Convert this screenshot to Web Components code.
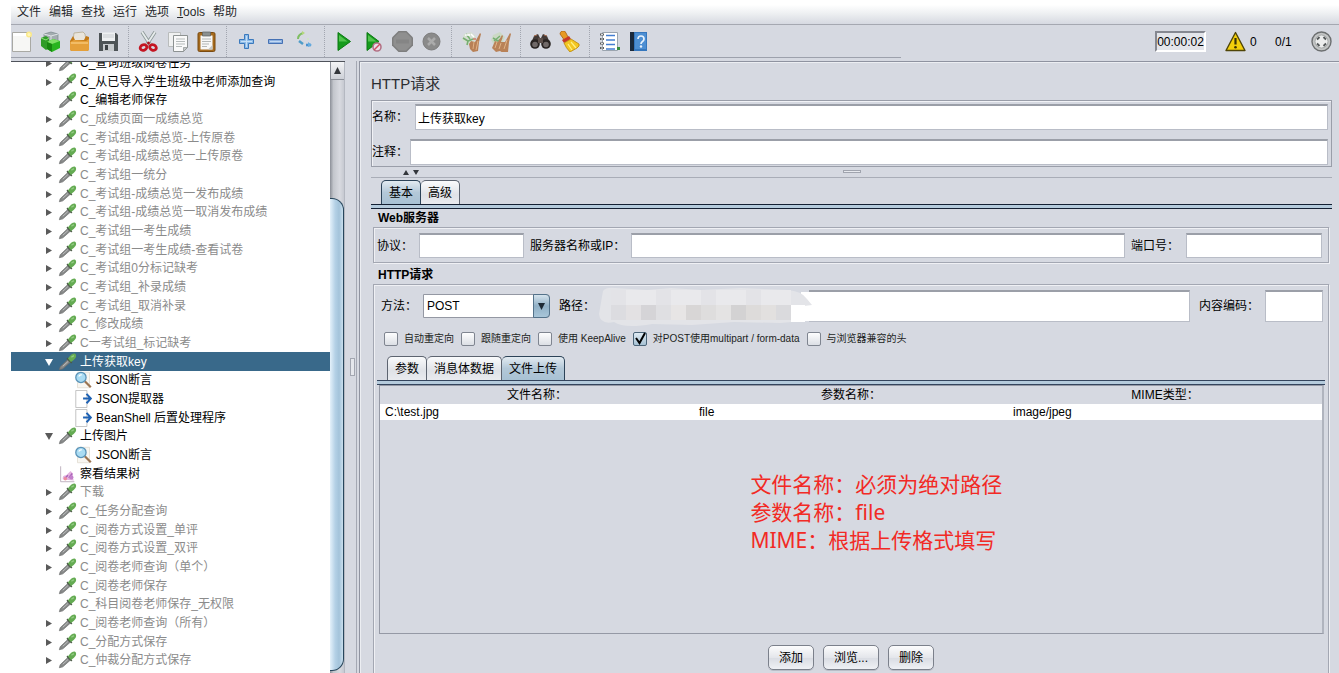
<!DOCTYPE html>
<html lang="zh-CN">
<head>
<meta charset="utf-8">
<title>JMeter</title>
<style>
  html, body { margin: 0; height: 100%; }
  body {
    --panel: #d6d9e1;
    background: #fff; overflow: hidden; color: #000;
    font: 12px/16px "Liberation Sans", "Noto Sans CJK SC", sans-serif;
  }
</style>
</head>
<body>
<jm-app></jm-app>

<script>
const define = (name, html, setup) => customElements.define(name, class extends HTMLElement {
  connectedCallback() {
    if (this.shadowRoot) return;
    const root = this.attachShadow({ mode: 'open' });
    const t = document.createElement('template');
    t.innerHTML = '<style>*{box-sizing:border-box}button,input,select{font:inherit;color:inherit;margin:0}</style>' +
      (typeof html === 'function' ? html(this) : html);
    root.append(t.content.cloneNode(true));
    if (setup) setup(this, root);
  }
});

const ICONS = {
  new: '<path d="M1.500 1.500h18v19h-18z" fill="#f7f7f5" stroke="#a9a9a4"/><path d="M2 2h17v3H2z" fill="#fff"/><circle cx="18" cy="3.500" r="3" fill="#fbe98a"/><circle cx="18" cy="3.500" r="1.500" fill="#fff6b8"/>',
  templates: '<path d="M4 3l7-2 7 2v9l-7 4-7-4z" fill="#a3acb0" stroke="#78868a" stroke-width=".7"/><path d="M4 3l7 2 7-2M11 5v9" stroke="#dfe5e6" fill="none"/><path d="M1 7l5-2 3 2v10l-3 2-5-4z" fill="#2f9c27"/><path d="M1 7l5 2 3-2" stroke="#91df7c" fill="none"/><path d="M7 11l6-3 7 2v7l-8 4-5-3z" fill="#28b41e"/><path d="M7 11l5 2 8-3-7-2z" fill="#7fe065"/><path d="M12 13v8l-5-3v-7z" fill="#17870f"/>',
  open: '<path d="M5 2l9-1 2 2 1 7H4z" fill="#e9e5dc" stroke="#b5a98e" stroke-width=".8"/><path d="M1 10l3-5 2 4h9l2-4 3 1v13l-2 1H3l-2-1z" fill="#c27a18"/><path d="M1 11l4-2 12 1 3-2v11l-2 1H3l-2-1z" fill="#e5a03a"/><path d="M2 12h17" stroke="#ffd890"/>',
  save: '<path d="M1 2h17l2 2v16H1z" fill="#4d5356"/><path d="M4 1.500h13V10H4z" fill="#eef0f2"/><path d="M5 4h11M5 6h11" stroke="#c8ccd0"/><path d="M5 13h11v7H5z" fill="#c6cacd"/><path d="M7 14h3v5H7z" fill="#3c4144"/>',
  cut: '<path d="M4 1l8.500 13M17 1L8.500 14" stroke="#8b9696" stroke-width="3.400"/><path d="M4 1l8.500 13M17 1L8.500 14" stroke="#e7ecec" stroke-width="1.800"/><ellipse cx="5.500" cy="16.500" rx="3.400" ry="2.700" fill="none" stroke="#c41421" stroke-width="2.800" transform="rotate(-25 5.500 16.500)"/><ellipse cx="15" cy="16.500" rx="3.400" ry="2.700" fill="none" stroke="#c41421" stroke-width="2.800" transform="rotate(25 15 16.500)"/><circle cx="10.500" cy="12" r="1.500" fill="#a9131f"/>',
  copy: '<path d="M1.500 1.500h12v14h-12z" fill="#f0f1f1" stroke="#b9bcbc"/><path d="M6.500 4.500h14v12l-4 4h-10z" fill="#fafafa" stroke="#8d9292"/><path d="M9 8h9M9 10.500h9M9 13h9M9 15.500h6" stroke="#b6bbbb"/><path d="M20.500 16.500h-4v4z" fill="#c5c8c8" stroke="#8d9292" stroke-width=".7"/>',
  paste: '<rect x="2" y="1.500" width="17" height="19" rx="1.500" fill="#a56a1d" stroke="#7a4a10"/><path d="M4.500 4.500h12v14h-12z" fill="#f8f8f8"/><path d="M6 8h9M6 10.500h9M6 13h7M6 15.500h5" stroke="#b4b8b8"/><path d="M6.500 1h8v4h-8z" fill="#8b9090" stroke="#5d6262" stroke-width=".7"/><path d="M12 18.500l4.500-4.500v4.500z" fill="#c4c8c8"/>',
  plus: '<path d="M8.500 3.500h4v5h5v4h-5v5h-4v-5h-5v-4h5z" fill="#8dbbe8" stroke="#3b79bd"/><path d="M10.500 5v11M5 10.500h11" stroke="#c6e0f7"/>',
  minus: '<path d="M3.500 8.500h14v4h-14z" fill="#8db1e0" stroke="#4571b4"/><path d="M5 10.500h11" stroke="#c3d9f3"/>',
  toggle: '<path d="M4 8c0-3 2-5 5-6" fill="none" stroke="#7fbe63" stroke-width="2"/><path d="M8 0l3 2-3 2z" fill="#b3d77b"/><path d="M5 10l4 3" stroke="#4f9cc8" stroke-width="2.400"/><path d="M12 14h5" stroke="#4a92d0" stroke-width="2.600"/><path d="M14 11l4 3-4 2z" fill="#67aee0"/><circle cx="14" cy="8" r="1" fill="#cfe6c3"/>',
  run: '<path d="M4 1.500L16.500 10.500 4 19.500z" fill="#159b1c" stroke="#0b7911"/><path d="M5 4l8.500 6.500H5z" fill="#53c44e"/>',
  run2: '<path d="M4 1.500L16 10.500 4 19.500z" fill="#159b1c" stroke="#0b7911"/><path d="M5 4l8.500 6.500H5z" fill="#53c44e"/><circle cx="14" cy="16" r="4" fill="#e9dfe9" stroke="#b37387" stroke-width="1.600"/><path d="M11 19l6-6" stroke="#d24b62" stroke-width="1.500"/>',
  stop: '<path d="M6.500 0h8l6.500 6.500v8L14.500 21h-8L0 14.500v-8z" fill="#7e7e7e"/><path d="M7 1.500h7l5.500 5.500v7L14 19.500H7L1.500 14V7z" fill="#8f8f8f"/><path d="M4 10.500h13" stroke="#858585" stroke-width="4"/>',
  shutdown: '<circle cx="10.500" cy="10.500" r="8.500" fill="#8a8a8a" stroke="#7b7b7b"/><path d="M7 7l7 7M14 7l-7 7" stroke="#ababab" stroke-width="2.500"/>',
  clear: '<path d="M3 3l7-2 5 4-2 8-6 1-6-5z" fill="#d5ded1"/><path d="M2 7l5 3 5-2M5 3l4 5M7 10l-1 4" stroke="#77af72" stroke-width="1.600" fill="none"/><path d="M4 4h5M10 3l3 3" stroke="#fff" stroke-width="1.500"/><path d="M9 18l-1-5 2-3 4 1 5-9 1 1-2 8-1 9-5 1z" fill="#b88056"/><path d="M12 18l1-7M15 19l2-9" stroke="#e1b184"/><path d="M12 8h3" stroke="#c74b33"/>',
  clearall: '<path d="M3 4l7-3 5 5-3 7-8 1-3-5z" fill="#cbd9c5"/><path d="M3 7l5 3 4-3M4 10l6-5" stroke="#77af72" stroke-width="1.500" fill="none"/><path d="M2 17l3-7 3 1 4-7 1 1-2 6 4 0 5-9 1 1-2 8-1 10-5 1-3-2-4 1z" fill="#b98258"/><path d="M5 17l2-6M9 18l2-6M14 18l3-9" stroke="#e0b487"/>',
  search: '<path d="M4 5l4-2 2 4-1 5H1zM17 5l-4-2-2 4 1 5h8z" fill="#433a37"/><circle cx="5" cy="13" r="4.800" fill="#292422"/><circle cx="16" cy="13" r="4.800" fill="#292422"/><path d="M8 7h5v5H8z" fill="#5d504b"/><circle cx="5" cy="13.500" r="2.800" fill="#706968"/><circle cx="16" cy="13.500" r="2.800" fill="#706968"/><path d="M4 5l3-1M14 4l3 1" stroke="#a56b4e"/>',
  broom: '<path d="M3 0q3-1 4 2l3 6-4 2L1 3q0-2 2-3z" fill="#e79a24" stroke="#a85f13" stroke-width=".8"/><path d="M3 9l7-4 2 3-7 4z" fill="#c8382a"/><path d="M5 12l7-4 8 5q1 2-2 4l-7 4q-4-4-6-9z" fill="#f3c622" stroke="#b98408" stroke-width=".8"/><path d="M9 13l4 6M12 11l5 6" stroke="#fff083" stroke-width="1.200"/>',
  func: '<path d="M3.500 1.500h15v18h-15z" fill="#fff" stroke="#9ba4ae"/><path d="M7 4.500h9M7 9h9M7 13.500h9M7 18h9" stroke="#437ed1" stroke-width="1.600"/><path d="M1 3.500h4M1 8h4M1 12.500h4M1 17h4" stroke="#5b5e60" stroke-width="2"/><path d="M2 3.500h2M2 8h2M2 12.500h2M2 17h2" stroke="#ddd"/><path d="M18 16h3v3h-3z" fill="#348d3b"/>',
  help: '<path d="M2 1h17v19H2z" fill="#3577be"/><path d="M2 1h4v19H2z" fill="#1b2a3c"/><path d="M7 2h11v16H7z" fill="#4d8fd3"/><path d="M10 8q0-3 3-3t3 3q0 1.500-1.500 2.500T13 13" stroke="#e7f2fd" stroke-width="1.700" fill="none"/><circle cx="13" cy="15.500" r="1.200" fill="#e7f2fd"/>',
  warn: '<path d="M10.500 1.500L20 19.500H1z" fill="#f3cf0b" stroke="#4f4507" stroke-width="1.400" stroke-linejoin="round"/><path d="M10.500 7v6.500" stroke="#3b3405" stroke-width="2.200"/><circle cx="10.500" cy="16.300" r="1.300" fill="#3b3405"/>',
  remote: '<circle cx="10.500" cy="10.500" r="9.500" fill="#c3c5c5" stroke="#6c6f70" stroke-width="1.400"/><circle cx="10.500" cy="10.500" r="6.500" fill="#eceded" stroke="#9b9e9e" stroke-width=".8"/><path d="M6 8.500L8.500 6M12.500 6L15 8.500M15 12.500L12.500 15M8.500 15L6 12.500" stroke="#55595a" stroke-width="1.900"/>',
  sampler: '<path d="M1 19.500l1-3.500L11 7.500l3 3L5 18.500z" fill="#858787" stroke="#6b6d6d" stroke-width=".8"/><path d="M5 15.500l6-5.500" stroke="#c3c5c5" stroke-width="1.100"/><path d="M10 6l5.500 5.500" stroke="#4b5a47" stroke-width="2"/><path d="M11 6.500q3.500-6 8-6 2.500 1.500 1 5-2 3-5.500 5z" fill="#64ab52"/><path d="M15 5l3-2" stroke="#93cb83" stroke-width="1.600"/>',
  assert: '<path d="M3.500 1.500h14v18h-14z" fill="#f8f6f1" stroke="#e2ddd3"/><path d="M12 12l7 7" stroke="#9b7553" stroke-width="2.600"/><circle cx="7.500" cy="7.500" r="6" fill="#aadcf3" stroke="#5a93b8" stroke-width="1.500"/><path d="M5 6.500q1-2.500 3.500-2" stroke="#fff" stroke-width="1.500" fill="none"/>',
  post: '<path d="M1.500 .5h13v20h-13z" fill="#fff" stroke="#b9b9b9"/><path d="M10 10h9M14 4.500l5 5.500-5 5.500" stroke="#1f62b4" stroke-width="2.400" fill="none"/>',
  result: '<path d="M2.500 1.500v18h16" stroke="#b6a9b8" fill="none"/><path d="M5 17q-1-5 4-5l5-5 3 3-1 4 2 4z" fill="#e3b3df"/><path d="M7 16l4-4M12 15l4-5" stroke="#a861b8" stroke-width="1.700"/><circle cx="15" cy="14.500" r="2.500" fill="#c27fcb"/><circle cx="8" cy="16" r="2" fill="#ee8c9d"/>'
};

define('jm-icon', el => `<style>:host{display:block;width:21px;height:21px;flex:none}svg{display:block;width:100%;height:100%}</style>
  <svg viewBox="0 0 21 21" fill="none" aria-hidden="true">${ICONS[el.getAttribute('name')]}</svg>`);

define('jm-menubar', `<style>
  :host{display:block;background:linear-gradient(#fff 20%,#eef0f2 55%,#d6d9e1);border-bottom:1px solid #a5a8b1}
  nav{display:flex;gap:8px;height:24px;padding-left:6px}
  button{border:0;padding:0;background:none;line-height:24px;color:#26282b}
  </style><nav aria-label="菜单"><button>文件</button><button>编辑</button><button>查找</button><button>运行</button><button>选项</button><button><u>T</u>ools</button><button>帮助</button></nav>`);

const toolGroups = [
  [['new','新建'],['templates','模板'],['open','打开'],['save','保存']],
  [['cut','剪切'],['copy','复制'],['paste','粘贴']],
  [['plus','展开'],['minus','折叠'],['toggle','切换']],
  [['run','启动'],['run2','不停顿启动'],['stop','停止'],['shutdown','关闭']],
  [['clear','清除'],['clearall','清除全部']],
  [['search','搜索'],['broom','重置搜索']],
  [['func','函数助手'],['help','帮助']]
];
define('jm-toolbar', `<style>
  :host{display:flex;align-items:center;height:33px;
    background:linear-gradient(90deg,#9da1ac 67%,transparent 67%) bottom/100% 1px no-repeat, var(--panel)}
  .tools{display:flex;gap:8px;align-items:center;flex:1}
  button{border:0;background:none;padding:0;width:21px;height:21px}
  i{width:3px;height:31px;background:repeating-linear-gradient(#a2a6b0 0 1px,transparent 1px 2px) 1px 0/1px 100% no-repeat}
  .status{display:flex;align-items:center;padding-right:7px}
  .time{width:51px;height:21px;padding:0;border:2px solid #858891;border-right-color:#fff;border-bottom-color:#fff;background:#e3e5ea;text-align:center}
  .warn{margin-left:19px} .count{margin-left:4px;width:25px} .threads{width:36px}
  </style><div class="tools">${toolGroups.map(g => g.map(([n,t]) => `<button aria-label="${t}"><jm-icon name="${n}"></jm-icon></button>`).join('')).join('<i></i>')}</div>
  <div class="status"><input class="time" aria-label="时间" value="00:00:02" readonly><jm-icon class="warn" name="warn"></jm-icon><span class="count">0</span><span class="threads">0/1</span><jm-icon name="remote"></jm-icon></div>`);

define('jm-node', el => {
  const state = el.getAttribute('state'), icon = el.getAttribute('icon') || 'sampler';
  const tri = state === 'open' ? 'M1 2h8L5 9z' : state === 'closed' ? 'M2 2v7l6-3.500z' : '';
  return `<style>
  :host{display:flex;align-items:center;height:19px;padding-left:33px;white-space:nowrap}
  :host([child]){padding-left:49px}
  :host([disabled]){color:#8b8b8b}
  :host([selected]){background:#39698a;color:#fff}
  .t{width:10px;height:10px;margin-right:4px;fill:#5a5a5a} :host([selected]) .t{fill:#fff}
  jm-icon{width:19px;height:18px;margin-right:3px}
  </style><svg class="t" viewBox="0 0 10 10" aria-hidden="true"><path d="${tri}"/></svg><jm-icon name="${icon}"></jm-icon><slot></slot>`;
}, el => el.setAttribute('role', 'treeitem'));

const nodes = [
  ['C_查询班级阅卷任务','closed'],['C_从已导入学生班级中老师添加查询','closed'],['C_编辑老师保存',''],
  ['C_成绩页面一成绩总览','closed','disabled'],['C_考试组-成绩总览-上传原卷','closed','disabled'],['C_考试组-成绩总览一上传原卷','closed','disabled'],
  ['C_考试组一统分','closed','disabled'],['C_考试组-成绩总览一发布成绩','closed','disabled'],['C_考试组-成绩总览一取消发布成绩','closed','disabled'],
  ['C_考试组一考生成绩','closed','disabled'],['C_考试组一考生成绩-查看试卷','closed','disabled'],['C_考试组0分标记缺考','closed','disabled'],
  ['C_考试组_补录成绩','closed','disabled'],['C_考试组_取消补录','closed','disabled'],['C_修改成绩','closed','disabled'],['C一考试组_标记缺考','closed','disabled'],
  ['上传获取key','open','selected'],['JSON断言','','child icon="assert"'],['JSON提取器','','child icon="post"'],['BeanShell 后置处理程序','','child icon="post"'],
  ['上传图片','open'],['JSON断言','','child icon="assert"'],['察看结果树','','icon="result"'],['下载','closed','disabled'],
  ['C_任务分配查询','closed','disabled'],['C_阅卷方式设置_单评','closed','disabled'],['C_阅卷方式设置_双评','closed','disabled'],['C_阅卷老师查询（单个）','closed','disabled'],
  ['C_阅卷老师保存','','disabled'],['C_科目阅卷老师保存_无权限','','disabled'],['C_阅卷老师查询（所有）','closed','disabled'],['C_分配方式保存','closed','disabled'],['C_仲裁分配方式保存','closed','disabled']
];
define('jm-tree', `<style>
  :host{display:flex;width:334px;flex:none;min-height:0;border-top:1px solid #4f535b;background:#fff}
  .view{flex:1;min-width:0;overflow:hidden}
  .list{margin-top:-9px}
  jm-node:nth-child(3n){height:18px}
  .bar{width:15px;display:flex;flex-direction:column;background:linear-gradient(90deg,#8c9098,#c3c6cc 25%,#d8dae0 70%,#c6c9d1);border-right:1px solid #b4b8c1}
  .bar button{height:18px;border:0;border-bottom:1px solid #8b8f98;border-left:1px solid #8b8f98;padding:0;background:linear-gradient(#f3f4f6,#cdd0d7);display:grid;place-items:center}
  .thumb{flex:1;margin:118px 0 2px;border:1px solid #27465c;border-left:0;border-radius:0 12px 12px 0;background:linear-gradient(90deg,#e4f1fa,#b4d1e6 40%,#a3c3da 70%,#c9dfee)}
  </style><div class="view"><div class="list" role="tree">${nodes.map(([t,s,a='']) => `<jm-node state="${s}" ${a}>${t}</jm-node>`).join('')}</div></div>
  <div class="bar"><button aria-label="向上滚动"><svg width="7" height="7"><path d="M3.500 0L7 7H0z" fill="#33363b"/></svg></button><div class="thumb"></div></div>`);

define('jm-field', el => `<style>
  :host{display:flex;align-items:center;gap:6px;min-width:0}
  :host([wide]){flex:1}
  label{white-space:nowrap;flex:none}
  input{flex:1;min-width:0;width:100%;height:100%;min-height:25px;border:1px solid #b9bdc7;border-top:2px solid #9b9fa8;background:#fff;padding:0 2px;border-radius:0}
  .box{position:relative;flex:1;min-width:0;align-self:stretch;display:flex}
  ::slotted(svg){position:absolute;left:-4px;top:-4px}
  </style><label for="f">${el.getAttribute('label')}：</label><div class="box"><input id="f" value="${el.getAttribute('value') || ''}"><slot></slot></div>`);

define('jm-tabs', el => {
  const on = +el.getAttribute('active');
  return `<style>
  :host{display:block}
  div{display:flex;padding-left:10px;height:24px}
  button{border:1px solid #5d6470;border-bottom:0;border-left-width:0;border-radius:5px 5px 0 0;padding:0 7px;background:linear-gradient(#fafbfc,#dfe2e7 60%,#e9ebef);white-space:nowrap}
  button:first-child{border-left-width:1px}
  button[aria-selected=true]{border-color:#2c4358;background:linear-gradient(#e3ebf1,#b3c8d8 50%,#a8c1d3)}
  hr{margin:0;border:solid var(--rule,#142033);border-width:1px 0;height:5px;background:#b5cbdc}
  </style><div role="tablist">${el.getAttribute('items').split(',').map((t,i) => `<button role="tab" aria-selected="${i===on}">${t}</button>`).join('')}</div><hr>`;
});

define('jm-group', `<style>
  :host{display:block}
  h2{margin:0 0 0 5px;font:bold 12px/18px "Liberation Sans","Noto Sans CJK SC",sans-serif}
  .b{border:1px solid #a3a7b2;box-shadow:inset 1px 1px #eff0f4,1px 1px #eff0f4}
  :host([fill]){display:flex;flex-direction:column;flex:1;min-height:0}
  :host([fill]) .b{flex:1;min-height:0;display:flex;flex-direction:column;border-bottom:0}
  </style><h2></h2><div class="b"><slot></slot></div>`,
  (el, r) => { r.querySelector('h2').textContent = el.getAttribute('heading'); });

define('jm-check', el => `<style>
  :host{display:block}
  label{display:flex;align-items:center;gap:6px;font-size:10px;line-height:14px;white-space:nowrap;color:#1c1e22}
  .c{display:grid}
  input,svg{grid-area:1/1;width:14px;height:14px}
  input{appearance:none;border:1px solid #7f8590;border-radius:2px;background:linear-gradient(#fdfdfe,#dcdfe5)}
  input:checked{background:linear-gradient(#dfeaf2,#a6c1d3);border-color:#4b6478}
  svg{display:none;pointer-events:none;overflow:visible} input:checked + svg{display:block}
  </style><label><span class="c"><input type="checkbox" ${el.hasAttribute('checked') ? 'checked' : ''}><svg viewBox="0 0 14 14"><path d="M3 6l3.500 5L12 1" fill="none" stroke="#000" stroke-width="2"/></svg></span><span><slot></slot></span></label>`);

define('jm-files', `<style>
  :host{display:block;flex:1;min-height:0;margin:0 4px 0 5px;border:1px solid #9599a5;border-right-width:2px;border-right-color:#b0b4be}
  table{width:100%;border-collapse:collapse;table-layout:fixed}
  th{font-weight:normal;height:18px;padding:0;line-height:18px}
  td{height:16px;padding:0 5px;line-height:16px;background:#fff}
  .note{margin:50px 0 0;padding-left:calc(39% + 3px);color:#f22a25;font:21px/28px "Noto Sans","Noto Sans CJK SC",sans-serif}
  </style><table><thead><tr><th>文件名称：</th><th>参数名称：</th><th>MIME类型：</th></tr></thead>
  <tbody><tr><td>C:\\test.jpg</td><td>file</td><td>image/jpeg</td></tr></tbody></table>
  <p class="note">文件名称：必须为绝对路径<br>参数名称：file<br>MIME：根据上传格式填写</p>`);

define('jm-button', `<style>:host{display:block}
  button{height:25px;padding:0 10px;border:1px solid #7b808b;border-radius:5px;background:linear-gradient(#fcfcfd,#e4e6eb 50%,#d9dce3 52%,#eff1f5);box-shadow:0 1px #b9bdc7}
  </style><button><slot></slot></button>`);

let blocks = '';
const shades = ['#dcdce0','#e3e1e3','#d5d4d7','#dfdfe2','#e7e5e5','#d8d6d6','#dedddd','#e4e3e3','#d3d2d3','#dddbda','#e2e0df','#dadadd'];
for (let i = 0; i < 12; i++) {
  blocks += `<rect x="${14 + i * 15}" y="19" width="15" height="15" fill="${shades[i]}"/>`;
  blocks += `<rect x="${14 + i * 15}" y="4" width="15" height="15" fill="${i % 3 ? '#e9e9ec' : '#e3e3e7'}"/>`;
}

define('jm-request', `<style>
  :host{display:flex;flex-direction:column;flex:1;min-width:0;min-height:0;border:1px solid #8f93a0;border-width:1px 0 0 1px;box-shadow:inset 1px 1px #eceef2;padding:6px 7px 0 11px}
  h1{margin:0;font-size:15px;font-weight:normal;line-height:32px;color:#2b2d31}
  .id{border:1px solid #9a9ea9;box-shadow:inset 1px 1px #f1f2f6;padding:3px 3px 1px 0;display:grid;gap:9px}
  .id jm-field{height:26px} .name{gap:7px} .note{gap:2px}
  .split{height:11px;flex:none;border-bottom:1px solid #a9adb7;display:flex;align-items:flex-start;padding:3px 48px 0 32px;margin-bottom:2px}
  .split svg{flex:none}
  .split .grip{height:3px;width:18px;border:1px solid #a0a4ae;background:#e7e9ee;margin:0 auto}
  .g{margin:0 3px 0 2px}
  .server{margin-bottom:3px}
  .row{display:flex;gap:6px;padding:5px 6px 4px 3px}
  .row2{display:flex;gap:9px;height:37px;padding:5px 5px 0 7px;flex:none}
  .proto{width:147px}.port{width:191px;gap:7px}.enc{width:124px}
  .method{display:flex;align-items:center;gap:6px}
  .sel{display:grid;width:127px;height:24px}
  select{grid-area:1/1;appearance:none;border:1px solid #9498a3;border-radius:0 4px 4px 0;background:#fff;padding:0 3px}
  .arrow{grid-area:1/1;justify-self:end;width:17px;border:1px solid #54728a;border-radius:0 4px 4px 0;background:linear-gradient(#d5e3ed,#90b0c6 50%,#a9c6d9);pointer-events:none;display:grid;place-items:center}
  .checks{display:flex;gap:7px;padding:10px 10px}
  .sub{margin:0 3px;--rule:#34445c}
  .actions{display:flex;justify-content:center;gap:9px;height:39px;padding-top:11px;flex:none}
  </style>
  <h1>HTTP请求</h1>
  <div class="id"><jm-field class="name" label="名称" value="上传获取key"></jm-field><jm-field class="note" label="注释"></jm-field></div>
  <div class="split"><svg width="16" height="5" fill="#33363b"><path d="M0 5l3-5 3 5zM10 0h6l-3 5z"/></svg><span class="grip"></span></div>
  <jm-tabs items="基本,高级" active="0"></jm-tabs>
  <jm-group class="g server" heading="Web服务器"><div class="row"><jm-field class="proto" label="协议"></jm-field><jm-field wide label="服务器名称或IP"></jm-field><jm-field class="port" label="端口号"></jm-field></div></jm-group>
  <jm-group class="g" fill heading="HTTP请求">
    <div class="row2">
      <div class="method"><label for="m">方法：</label><div class="sel"><select id="m"><option>POST</option></select><span class="arrow"><svg width="7" height="7"><path d="M0 0h7L3.500 7z" fill="#1d2a35"/></svg></span></div></div>
      <jm-field wide label="路径"><svg width="220" height="42" viewBox="0 0 220 42" aria-hidden="true"><path d="M0 3h212v34H0z" fill="#d6d9e1"/><path d="M204 6h16v29h-16z" fill="#fff"/><path d="M6 5q3-4 12-3l32 2 24-2 30 2 40-2 46 2q15 1 20 9l5 6-8 1v15l-24 2-46-1-42 3-40-1q-28 5-38-2-14 3-15-8z" fill="#e3e4e8"/>${blocks}<path d="M194 19h14v17h-14z" fill="#fff"/></svg></jm-field>
      <jm-field class="enc" label="内容编码"></jm-field>
    </div>
    <div class="checks"><jm-check>自动重定向</jm-check><jm-check>跟随重定向</jm-check><jm-check>使用 KeepAlive</jm-check><jm-check checked>对POST使用multipart / form-data</jm-check><jm-check>与浏览器兼容的头</jm-check></div>
    <jm-tabs class="sub" items="参数,消息体数据,文件上传" active="2"></jm-tabs>
    <jm-files></jm-files>
    <div class="actions"><jm-button>添加</jm-button><jm-button>浏览...</jm-button><jm-button>删除</jm-button></div>
  </jm-group>`);

define('jm-app', `<style>
  :host{display:flex;flex-direction:column;height:100vh;margin-left:11px;background:var(--panel)}
  main{display:flex;flex:1;min-height:0;padding-top:3px}
  .divider{width:14px;flex:none;display:flex;align-items:center;justify-content:center;background:linear-gradient(90deg,transparent 11px,#a4a8b3 11px,#a4a8b3 12px,transparent 12px)}
  .divider span{width:5px;height:18px;border:1px solid #a2a6b0;background:#e5e7ec}
  </style><jm-menubar></jm-menubar><jm-toolbar></jm-toolbar>
  <main><jm-tree></jm-tree><div class="divider"><span></span></div><jm-request></jm-request></main>`);
</script>
</body>
</html>
